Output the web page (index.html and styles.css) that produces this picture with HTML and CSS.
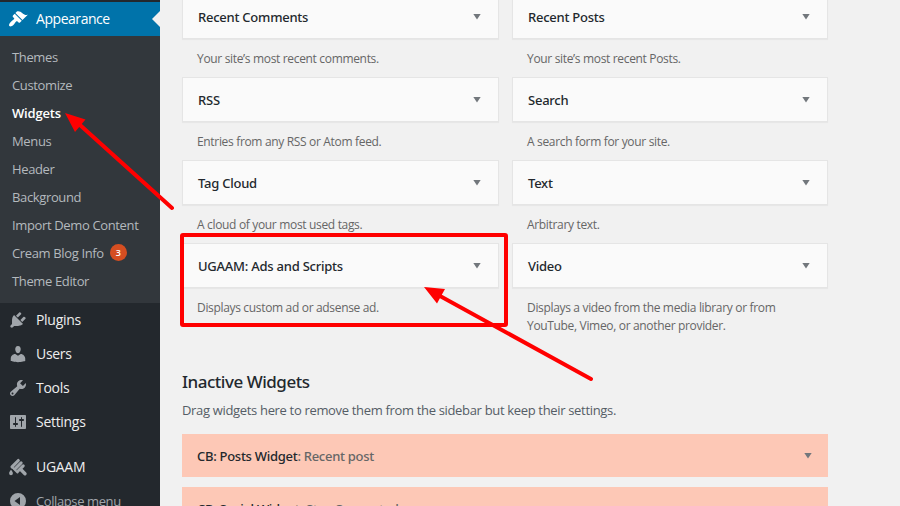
FILE: index.html
```html
<!DOCTYPE html>
<html lang="en">
<head>
<meta charset="utf-8">
<title>Widgets</title>
<link rel="stylesheet" href="styles.css">
</head>
<body>
<div class="screen">
  <nav class="sidebar">
    <a class="item current">
      <svg class="icon" viewBox="0 0 20 20"><path d="M14.48 11.06L7.41 3.99l1.5-1.5c.5-.56 2.3-.47 3.51.32 1.21.8 1.43 1.28 2.91 2.1 1.18.64 2.45 1.26 4.45.85zm-.71.71L6.7 4.7 4.93 6.47c-.39.39-.39 1.02 0 1.41l1.06 1.06c.39.39.39 1.03 0 1.42-.6.6-1.43 1.11-2.21 1.69-.35.26-.7.53-1.01.84C1.43 14.23.4 16.08 1.4 17.07c.99 1 2.84-.03 4.18-1.36.31-.31.58-.66.85-1.02.57-.78 1.08-1.61 1.69-2.21.39-.39 1.02-.39 1.41 0l1.06 1.06c.39.39 1.02.39 1.41 0z"/></svg>
      <span>Appearance</span>
    </a>
    <div class="submenu">
      <a>Themes</a>
      <a>Customize</a>
      <a class="active">Widgets</a>
      <a>Menus</a>
      <a>Header</a>
      <a>Background</a>
      <a>Import Demo Content</a>
      <a>Cream Blog Info <span class="count">3</span></a>
      <a>Theme Editor</a>
    </div>
    <a class="item">
      <svg class="icon" viewBox="0 0 20 20"><path d="M13.11 4.36L9.87 7.6 8 5.73l3.24-3.24c.35-.34 1.05-.2 1.56.32.52.51.66 1.21.31 1.55zm-8 1.77l.91-1.12 9.01 9.01-1.19.84c-.71.71-2.63 1.16-3.82 1.16H6.14L4.9 17.26c-.59.59-1.54.59-2.12 0-.59-.58-.59-1.53 0-2.12l1.24-1.24v-3.88c0-1.13.4-3.19 1.09-3.89zm7.26 3.97l3.24-3.24c.34-.35 1.04-.21 1.55.31.52.51.66 1.21.31 1.55l-3.24 3.25z"/></svg>
      <span>Plugins</span>
    </a>
    <a class="item">
      <svg class="icon" viewBox="0 0 20 20"><path d="M10 9.25c-2.27 0-2.73-3.44-2.73-3.44C7 4.02 7.82 2 9.97 2c2.16 0 2.98 2.02 2.71 3.81 0 0-.41 3.44-2.68 3.44zm0 2.57L12.72 10c2.39 0 4.52 2.33 4.52 4.53v2.49s-3.65 1.13-7.24 1.13c-3.65 0-7.24-1.13-7.24-1.13v-2.49c0-2.25 1.94-4.48 4.47-4.48z"/></svg>
      <span>Users</span>
    </a>
    <a class="item">
      <svg class="icon" viewBox="0 0 20 20"><path d="M16.68 9.77c-1.34 1.34-3.3 1.67-4.95.99l-5.41 6.52c-.99.99-2.59.99-3.58 0s-.99-2.59 0-3.57l6.52-5.42c-.68-1.65-.35-3.61.99-4.95 1.28-1.28 3.12-1.62 4.72-1.06l-2.89 2.89 2.82 2.82 2.86-2.87c.53 1.58.18 3.39-1.08 4.65zM3.81 16.21c.4.39 1.04.39 1.43 0 .4-.4.4-1.04 0-1.43-.39-.4-1.03-.4-1.43 0-.39.39-.39 1.03 0 1.43z"/></svg>
      <span>Tools</span>
    </a>
    <a class="item">
      <svg class="icon" viewBox="0 0 20 20"><path d="M18 16V4c0-.55-.45-1-1-1H3c-.55 0-1 .45-1 1v12c0 .55.45 1 1 1h14c.55 0 1-.45 1-1zM8 11h1c.55 0 1 .45 1 1s-.45 1-1 1H8v1.500c0 .28-.22.5-.5.5s-.5-.22-.5-.5V13H6c-.55 0-1-.45-1-1s.45-1 1-1h1V5.500c0-.28.22-.5.5-.5s.5.22.5.5V11zm5-2h-1c-.55 0-1-.45-1-1s.45-1 1-1h1V5.500c0-.28.22-.5.5-.5s.5.22.5.5V7h1c.55 0 1 .45 1 1s-.45 1-1 1h-1v5.500c0 .28-.22.5-.5.5s-.5-.22-.5-.5V9z"/></svg>
      <span>Settings</span>
    </a>
    <div class="separator"></div>
    <a class="item">
      <svg class="icon" viewBox="0 0 20 20"><g stroke="#a0a5aa" stroke-linecap="round" fill="none"><path d="M4 9.800 10.300 3.500M7.100 11.800 13.100 5.800M10 14 15.200 8.800" stroke-width="3.100"/><path d="M4 10 9.500 15.500" stroke-width="2"/><path d="M12.800 12.500 17 16.700" stroke-width="3.400"/></g><path d="M3 12.800c1.200 1.600 1.900 2.600 1.900 3.500a1.900 1.900 0 0 1-3.800 0c0-.9.700-1.900 1.900-3.500z"/></svg>
      <span>UGAAM</span>
    </a>
    <a class="item collapse">
      <svg class="icon" viewBox="0 0 20 20"><path fill-rule="evenodd" d="M10 2a8 8 0 1 1 0 16 8 8 0 0 1 0-16zm2 4-5.500 4 5.500 4z"/></svg>
      <span>Collapse menu</span>
    </a>
  </nav>
  <main class="content">
    <div class="widgets">
      <section><h3><span>Recent Comments</span><i></i></h3><p>Your site’s most recent comments.</p></section>
      <section><h3><span>Recent Posts</span><i></i></h3><p>Your site’s most recent Posts.</p></section>
      <section><h3><span>RSS</span><i></i></h3><p>Entries from any RSS or Atom feed.</p></section>
      <section><h3><span>Search</span><i></i></h3><p>A search form for your site.</p></section>
      <section><h3><span>Tag Cloud</span><i></i></h3><p>A cloud of your most used tags.</p></section>
      <section><h3><span>Text</span><i></i></h3><p>Arbitrary text.</p></section>
      <section><h3><span>UGAAM: Ads and Scripts</span><i></i></h3><p>Displays custom ad or adsense ad.</p></section>
      <section><h3><span>Video</span><i></i></h3><p>Displays a video from the media library or from<br>YouTube, Vimeo, or another provider.</p></section>
    </div>
    <h2>Inactive Widgets</h2>
    <p class="hint">Drag widgets here to remove them from the sidebar but keep their settings.</p>
    <div class="inactive"><span>CB: Posts Widget<em>: Recent post</em></span><i></i></div>
    <div class="inactive"><span>CB: Social Widget<em>: Stay Connected</em></span><i></i></div>
  </main>
  <svg class="marks" viewBox="0 0 900 506">
    <rect x="182" y="235" width="324" height="90" rx="1"/>
    <path d="M80 125 172 208M440 296 591 379"/>
    <path class="head" d="M65 113 85.500 119.500 75 132zM424 287 445 289 437 303.500z"/>
  </svg>
</div>
</body>
</html>
```
FILE: styles.css
```css
* { box-sizing: border-box; }
body { margin: 0; font-family: "Open Sans", "Noto Sans", sans-serif; font-size: 13px; background: #f1f1f1; }
.screen { position: relative; display: flex; width: 900px; height: 506px; overflow: hidden; }
.sidebar { width: 160px; flex: none; background: #23282d; padding-top: 2px; }
.item { display: flex; align-items: center; height: 34px; padding-left: 8px; gap: 8px; font-size: 14px; letter-spacing: -0.3px; color: #eee; position: relative; }
.item span { padding-bottom: 2px; }
.icon { width: 20px; height: 20px; fill: #a0a5aa; flex: none; }
.current { background: #0073aa; color: #fff; letter-spacing: -0.45px; }
.current .icon { fill: #fff; }
.current::after { content: ""; position: absolute; right: 0; top: 9px; border: 8px solid transparent; border-left-width: 0; border-right-color: #f1f1f1; }
.submenu { background: #32373c; height: 267px; padding: 7px 0 0 12px; color: #b4b9be; letter-spacing: -0.36px; }
.submenu a { display: flex; align-items: center; height: 28px; white-space: pre; }
.submenu .active { color: #fff; font-weight: 600; letter-spacing: -0.2px; }
.count { width: 17px; height: 17px; margin: -1px 0 0 3px; border-radius: 50%; background: #d54e21; color: #fff; font-size: 9px; font-weight: 600; line-height: 17px; text-align: center; letter-spacing: 0; }
.separator { height: 11px; }
.collapse { color: #a0a5aa; font-size: 13px; letter-spacing: -0.4px; }
.collapse span { padding-bottom: 0; }
.content { width: 646px; margin-left: 22px; }
.widgets { display: grid; grid-template-columns: 317px 316px; column-gap: 13px; margin-top: -6px; grid-template-rows: repeat(4, 83px); }
h2, h3, p { margin: 0; }
h3, h2, .inactive { font-family: "Noto Sans", "Open Sans", sans-serif; font-weight: 500; }
h3 { display: flex; align-items: center; justify-content: space-between; height: 45px; padding: 0 16px 0 15px; background: #fafafa; border: 1px solid #e5e5e5; box-shadow: 0 1px 1px rgba(0,0,0,.04); color: #23282d; font-size: 13px; letter-spacing: -0.24px; }
i { width: 8px; height: 6px; margin-right: 1px; background: #72777c; clip-path: polygon(0 0, 100% 0, 50% 100%); }
section p { padding: 11px 0 0 15px; font-size: 12px; line-height: 18px; color: #666; letter-spacing: -0.33px; white-space: nowrap; }
h2 { margin-top: 45px; height: 22px; line-height: 22px; font-size: 17px; color: #23282d; letter-spacing: -0.48px; }
.hint { height: 41px; padding-top: 8px; line-height: 18px; color: #555d66; font-size: 13px; letter-spacing: -0.33px; white-space: nowrap; }
.inactive { display: flex; align-items: center; justify-content: space-between; height: 43px; margin-bottom: 10px; padding: 0 15px; background: #fdc8b6; color: #23282d; font-size: 13px; letter-spacing: -0.28px; }
.inactive em { font-style: normal; color: #666; }
.marks { position: absolute; left: 0; top: 0; width: 900px; height: 506px; fill: none; stroke: #f00; stroke-width: 4; stroke-linecap: round; }
.marks .head { fill: #f00; stroke: none; }
```
